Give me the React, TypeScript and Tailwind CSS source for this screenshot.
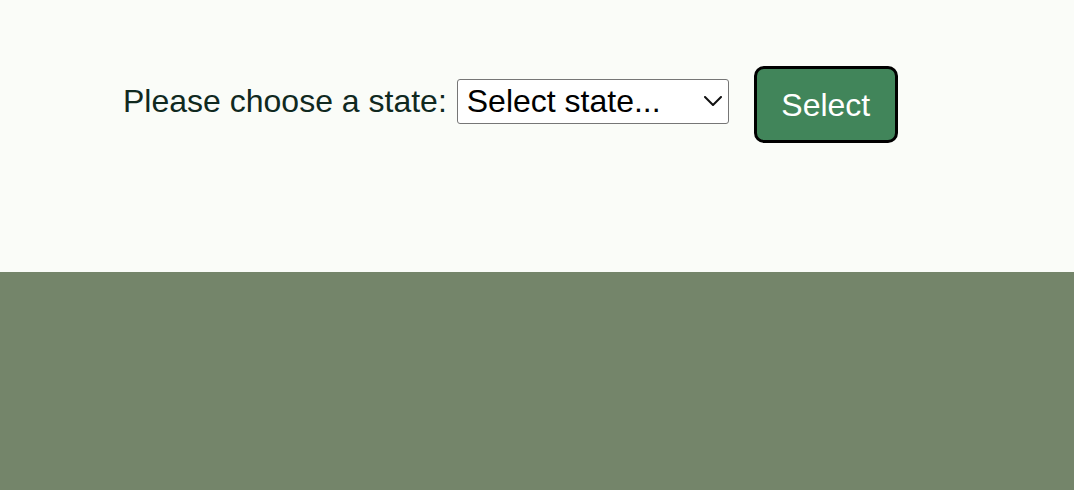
import { useState } from 'react'

const states = ['Alabama', 'Alaska', 'Arizona', 'California', 'Colorado', 'New York', 'Texas', 'Washington']

export default function App() {
  const [state, setState] = useState('')

  return (
    <div className="min-h-screen flex flex-col font-['Liberation_Sans',Arial,sans-serif]">
      {/* Form */}
      <section className="h-[272px] bg-[#fafcf8] pt-[66px] pl-[123px]">
        <div className="flex items-start">
          <label htmlFor="state" className="mt-[17px] text-[32px] leading-[37px] text-[#10291f] whitespace-nowrap">
            Please choose a state:
          </label>
          <div className="relative ml-[10px] mt-[13px]">
            <select
              id="state"
              value={state}
              onChange={(e) => setState(e.target.value)}
              className="appearance-none w-[272px] h-[45px] pl-[9px] pr-[40px] bg-white border border-[#767676] rounded-[3px] text-[32px] leading-[37px] text-black outline-none"
            >
              <option value="">Select state...</option>
              {states.map((s) => (
                <option key={s} value={s}>{s}</option>
              ))}
            </select>
            <svg
              className="absolute right-[7px] top-[17px] pointer-events-none"
              width="18"
              height="10"
              viewBox="0 0 18 10"
              fill="none"
              stroke="#111"
              strokeWidth="2"
              strokeLinecap="round"
              strokeLinejoin="round"
            >
              <polyline points="1,1 9,9 17,1" />
            </svg>
          </div>
          <button className="ml-[25px] w-[144px] h-[77px] pt-[2px] bg-[#41855a] border-[3px] border-black rounded-[10px] text-white text-[32px] leading-[37px]">
            Select
          </button>
        </div>
      </section>

      {/* Footer band */}
      <div className="flex-1 bg-[#74856a]" />
    </div>
  )
}
